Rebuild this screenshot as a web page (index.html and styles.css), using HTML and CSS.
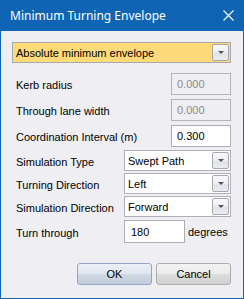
FILE: index.html
```html
<!DOCTYPE html>
<html lang="en">
<head>
  <meta charset="UTF-8">
  <title>Minimum Turning Envelope</title>
  <link rel="stylesheet" href="styles.css">
</head>
<body>
  <div class="dialog">
    <div class="titlebar">
      <span class="title">Minimum Turning Envelope</span>
      <svg class="close" width="11" height="11" viewBox="0 0 11 11">
        <path d="M0.5 0.5 L10.5 10.5 M10.5 0.5 L0.5 10.5" stroke="#fff" stroke-width="1.1" fill="none"/>
      </svg>
    </div>

    <div class="content">
      <div class="combo highlight">
        <span class="combo-text">Absolute minimum envelope</span>
        <span class="drop-btn"><span class="arrow"></span></span>
      </div>

      <div class="fields">
        <div class="row row-input">
          <span class="label">Kerb radius</span>
          <div class="textbox num disabled">0.000</div>
        </div>
        <div class="row row-input">
          <span class="label">Through lane width</span>
          <div class="textbox num disabled">0.000</div>
        </div>
        <div class="row row-input">
          <span class="label">Coordination Interval (m)</span>
          <div class="textbox num">0.300</div>
        </div>

        <div class="row row-combo first-combo">
          <span class="label">Simulation Type</span>
          <div class="combo">
            <span class="combo-text">Swept Path</span>
            <span class="drop-btn"><span class="arrow"></span></span>
          </div>
        </div>
        <div class="row row-combo">
          <span class="label">Turning Direction</span>
          <div class="combo">
            <span class="combo-text">Left</span>
            <span class="drop-btn"><span class="arrow"></span></span>
          </div>
        </div>
        <div class="row row-combo">
          <span class="label">Simulation Direction</span>
          <div class="combo">
            <span class="combo-text">Forward</span>
            <span class="drop-btn"><span class="arrow"></span></span>
          </div>
        </div>

        <div class="row row-turn">
          <span class="label">Turn through</span>
          <div class="turn">
            <div class="textbox deg">180</div>
            <span class="unit">degrees</span>
          </div>
        </div>
      </div>

      <div class="buttons">
        <button class="btn default">OK</button>
        <button class="btn">Cancel</button>
      </div>
    </div>
  </div>
</body>
</html>
```

FILE: styles.css
```css
* {
  box-sizing: border-box;
  margin: 0;
  padding: 0;
}

body {
  background: #fff;
  font-family: 'Liberation Sans', Arial, sans-serif;
  font-size: 11px;
  color: #000;
}

.dialog {
  width: 244px;
  height: 299px;
  background: #eeeef3;
  border: 1px solid #0f64b4;
  border-top: none;
  display: flex;
  flex-direction: column;
}

.titlebar {
  height: 31px;
  flex: none;
  margin: 0 -1px;
  background: #0f64b4;
  display: flex;
  align-items: center;
  justify-content: space-between;
  padding: 0 10px 1px 10px;
}

.title {
  color: #fff;
  font-family: 'Noto Sans', 'Open Sans', sans-serif;
  font-size: 12px;
}

.content {
  flex: 1;
  padding: 11px 12px 13px 11px;
  display: flex;
  flex-direction: column;
}

.combo {
  height: 21px;
  flex: none;
  border: 1px solid #aeb0b6;
  background: #fff;
  display: flex;
  align-items: center;
  justify-content: space-between;
  padding: 0 1px 0 3px;
}

.combo.highlight {
  background: #ffda79;
  border-color: #a9a9a9;
}

.combo-text {
  line-height: 1;
  padding-top: 1px;
}

.drop-btn {
  width: 17px;
  height: 17px;
  border: 1px solid #a5a8ae;
  border-radius: 2px;
  background: linear-gradient(#fafafa, #eceef1 50%, #dfe3e9 51%, #e9ecf0);
  display: flex;
  align-items: center;
  justify-content: center;
}

.arrow {
  width: 0;
  height: 0;
  border-left: 3px solid transparent;
  border-right: 3px solid transparent;
  border-top: 3px solid #545454;
}

.fields {
  margin-top: 10px;
  display: flex;
  flex-direction: column;
}

.row {
  display: grid;
  grid-template-columns: 112px 107px;
  align-items: center;
  flex: none;
}

.label {
  padding: 2px 0 0 4px;
  white-space: nowrap;
}

.row-input {
  height: 22px;
  margin-bottom: 4px;
}

.row-combo {
  height: 21px;
  margin-bottom: 2px;
}

.first-combo {
  margin-top: -1px;
}

.row-turn {
  height: 23px;
  margin-top: 1px;
}

.textbox {
  height: 100%;
  border: 1px solid #abadb3;
  background: #fff;
  display: flex;
  align-items: center;
}

.textbox.num {
  width: 60px;
  justify-self: end;
  padding-left: 5px;
}

.textbox.disabled {
  background: #eeeef3;
  border-color: #b4b4b8;
  color: #8c8c8c;
}

.turn {
  display: flex;
  align-items: center;
  height: 23px;
}

.textbox.deg {
  width: 61px;
  padding-left: 6px;
}

.unit {
  margin-left: 3px;
  padding-top: 1px;
}

.buttons {
  margin-top: auto;
  display: flex;
  justify-content: flex-end;
  gap: 4px;
}

.btn {
  width: 75px;
  height: 22px;
  font-family: 'Liberation Sans', Arial, sans-serif;
  font-size: 11px;
  color: #000;
  border: 1px solid #adadad;
  border-radius: 3px;
  background: linear-gradient(#f3f3f3, #ebebeb 50%, #dddddd 51%, #d0d0d0);
}

.btn.default {
  border-color: #8fa6c4;
  background: linear-gradient(#eaf0f7, #dfe6ef 50%, #d0d9e4 51%, #c3cedb);
}
```
